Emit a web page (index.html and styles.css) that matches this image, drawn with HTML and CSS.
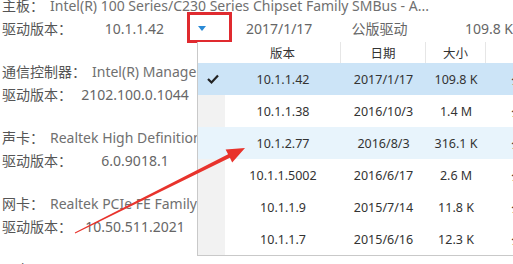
FILE: index.html
```html
<!DOCTYPE html>
<html lang="zh-CN">
<head>
<meta charset="utf-8">
<title>驱动版本</title>
<link rel="stylesheet" href="styles.css">
</head>
<body>
<div class="page">
  <div class="list">
    <div class="group">
      <div class="row"><span class="label">主板：</span><span class="value">Intel(R) 100 Series/C230 Series Chipset Family SMBus - A...</span></div>
      <div class="row drv">
        <span class="dlabel">驱动版本：</span>
        <span class="ver">10.1.1.42</span>
        <span class="toggle"><span class="tri"></span></span>
        <span class="date">2017/1/17</span>
        <span class="type">公版驱动</span>
        <span class="size">109.8 K</span>
      </div>
    </div>
    <div class="group">
      <div class="row"><span class="label">通信控制器：</span><span class="value">Intel(R) Management Engine Interface</span></div>
      <div class="row drv"><span class="dlabel">驱动版本：</span><span class="ver">2102.100.0.1044</span></div>
    </div>
    <div class="group">
      <div class="row"><span class="label">声卡：</span><span class="value">Realtek High Definition Audio</span></div>
      <div class="row drv"><span class="dlabel">驱动版本：</span><span class="ver">6.0.9018.1</span></div>
    </div>
    <div class="group">
      <div class="row"><span class="label">网卡：</span><span class="value">Realtek PCIe FE Family Controller</span></div>
      <div class="row drv"><span class="dlabel">驱动版本：</span><span class="ver">10.50.511.2021</span></div>
    </div>
    <div class="group">
      <div class="row"><span class="label">显卡：</span><span class="value">Intel(R) HD Graphics 630</span></div>
    </div>
  </div>

  <div class="redbox"></div>

  <div class="popup">
    <div class="prow head">
      <span class="c0"></span>
      <span class="c1 sep">版本</span>
      <span class="c2 sep">日期</span>
      <span class="c3 sep">大小</span>
      <span class="c4"></span>
    </div>
    <div class="prow selected">
      <span class="c0"><svg class="check" width="14" height="12" viewBox="0 0 14 12"><polyline points="2,6 5.5,9.5 12,2.5" fill="none" stroke="#222" stroke-width="2.2"/></svg></span>
      <span class="c1">10.1.1.42</span><span class="c2">2017/1/17</span><span class="c3">109.8 K</span><span class="c4">公版驱动</span>
    </div>
    <div class="prow">
      <span class="c0"></span>
      <span class="c1">10.1.1.38</span><span class="c2">2016/10/3</span><span class="c3">1.4 M</span><span class="c4">公版驱动</span>
    </div>
    <div class="prow hover">
      <span class="c0"></span>
      <span class="c1">10.1.2.77</span><span class="c2">2016/8/3</span><span class="c3">316.1 K</span><span class="c4">公版驱动</span>
    </div>
    <div class="prow">
      <span class="c0"></span>
      <span class="c1">10.1.1.5002</span><span class="c2">2016/6/17</span><span class="c3">2.6 M</span><span class="c4">公版驱动</span>
    </div>
    <div class="prow">
      <span class="c0"></span>
      <span class="c1">10.1.1.9</span><span class="c2">2015/7/14</span><span class="c3">11.8 K</span><span class="c4">公版驱动</span>
    </div>
    <div class="prow">
      <span class="c0"></span>
      <span class="c1">10.1.1.7</span><span class="c2">2015/6/16</span><span class="c3">12.3 K</span><span class="c4">公版驱动</span>
    </div>
  </div>

  <svg class="arrow" width="513" height="264" viewBox="0 0 513 264">
    <polygon fill="#e8332c" points="74.8,232.6 228.1,154.2 225.6,149.6 245,148 232.2,162.4 229.9,157.8 75.2,233.4"/>
  </svg>
</div>
</body>
</html>
```

FILE: styles.css
```css
html, body {
  margin: 0;
  padding: 0;
  background: #fff;
  overflow: hidden;
}
body {
  width: 513px;
  height: 264px;
  font-family: "Noto Sans", "Noto Sans CJK SC", sans-serif;
  font-size: 14px;
  color: #555;
}
.page {
  position: relative;
  width: 513px;
  height: 264px;
  overflow: hidden;
}
.list {
  margin-top: -6px;
  padding-left: 2px;
}
.group {
  margin-bottom: 20px;
}
.row {
  height: 23px;
  line-height: 23px;
  white-space: nowrap;
  display: flex;
}
.label {
  color: #555;
}
.value {
  margin-left: 6px;
  color: #707070;
}
.dlabel {
  width: 78px;
  color: #555;
}
.ver {
  width: 110px;
  text-align: center;
  color: #666;
}
.toggle {
  width: 57px;
  display: flex;
  align-items: center;
}
.tri {
  margin-left: 9px;
  width: 0;
  height: 0;
  border-left: 4.5px solid transparent;
  border-right: 4.5px solid transparent;
  border-top: 5px solid #2a8ad6;
}
.date {
  width: 106px;
  color: #666;
}
.type {
  width: 114px;
  color: #666;
}
.size {
  color: #666;
}
.redbox {
  position: absolute;
  left: 187px;
  top: 12px;
  width: 39px;
  height: 25px;
  border: 3px solid #e02a2f;
}
.popup {
  position: absolute;
  left: 197px;
  top: 42px;
  width: 420px;
  background: #fff;
  border-left: 1px solid #c9c9c9;
  border-bottom: 1px solid #c9c9c9;
  font-size: 12.5px;
  color: #333;
}
.prow {
  display: grid;
  grid-template-columns: 27px 116px 85px 60px 100px;
  height: 32px;
  align-items: center;
  white-space: nowrap;
}
.prow > span {
  text-align: center;
  height: 100%;
  display: flex;
  align-items: center;
  justify-content: center;
}
.prow .c0 {
  background: #f2f2f2;
}
.prow.head {
  height: 21px;
}
.prow.head .c0 {
  background: transparent;
}
.prow.head .sep {
  border-right: 1px solid #e6e6e6;
}
.prow.selected {
  background: #cce4f7;
}
.prow.selected .c0,
.prow.hover .c0 {
  background: transparent;
}
.prow.hover {
  background: #e8f4fc;
}
.check {
  display: block;
  margin-left: 2px;
}
.arrow {
  position: absolute;
  left: 0;
  top: 0;
  pointer-events: none;
}
```
